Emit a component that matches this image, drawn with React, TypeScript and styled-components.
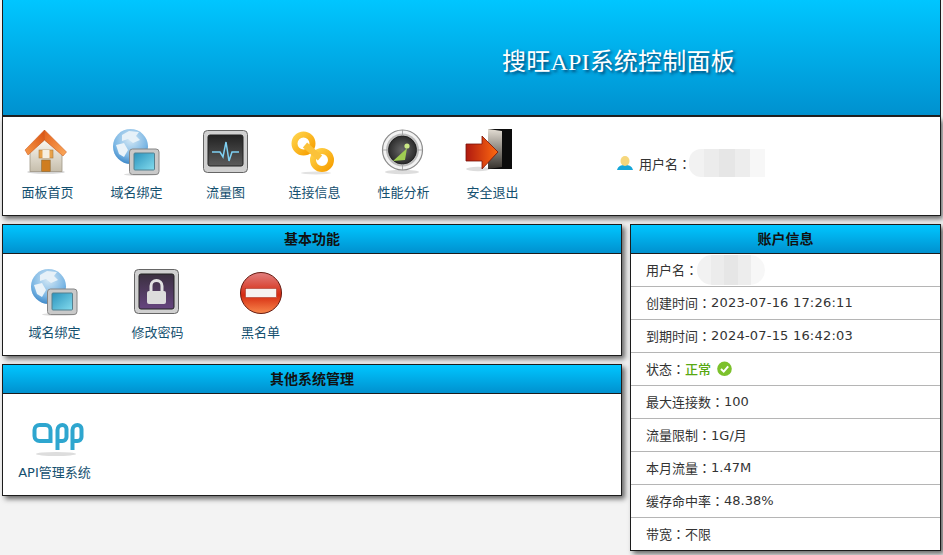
import React from "react";
import styled, {createGlobalStyle} from "styled-components";

const GlobalStyle = createGlobalStyle`
  html, body {
    margin: 0;
    padding: 0;
    background: #f3f3f3;
  }
  body {
    font-family: "DejaVu Sans", "Noto Sans CJK SC", sans-serif;
    font-size: 13px;
    color: #333;
  }
`

const blueBar = `linear-gradient(to bottom, #00c6ff, #0091cf)`

const Page = styled.div`
  width: 939px;
  height: 555px;
  padding: 0 2px;
  overflow: hidden;
`

const Header = styled.header`
  height: 117px;
  box-sizing: border-box;
  background: ${blueBar};
  border: 1px solid #1c1c1c;
  border-top: 0;
  border-bottom-width: 2px;
  padding: 47px 0 0 499px;
`

const Title = styled.h1`
  margin: 0;
  font-family: "Liberation Serif", "Noto Sans CJK SC", serif;
  font-size: 24px;
  line-height: 30px;
  font-weight: normal;
  letter-spacing: 0.2px;
  color: #fff;
  text-shadow: 2px 2px 3px rgba(0, 40, 80, 0.75);
`

const NavBar = styled.nav`
  height: 99px;
  box-sizing: border-box;
  background: #fff;
  border: 1px solid #1c1c1c;
  border-top: 0;
  box-shadow: 2px 3px 5px #666;
  display: flex;
  padding: 11px 0 0 0;
`

const IconItem = styled.a<{$width: number}>`
  width: ${p => p.$width}px;
  display: flex;
  flex-direction: column;
  align-items: center;
  color: #14506f;
  font-size: 13px;
  line-height: 16px;
  white-space: nowrap;
`

const IconBox = styled.div`
  width: 48px;
  height: 48px;
  margin-bottom: 9px;
`

const LogoBox = styled(IconBox)`
  width: 58px;
`

const UserInfo = styled.div`
  margin-left: 80px;
  height: 28px;
  margin-top: 21px;
  display: flex;
  align-items: center;
  color: #333;
`

const UserText = styled.span`
  margin-left: 6px;
`

// the colon sits in the middle of its em box in the reference, as the TC cut draws it
const Colon = styled.span`
  font-family: "Noto Sans CJK TC", sans-serif;
`

const Mosaic = styled.div<{$width: number; $height: number; $round: string; $pull: number}>`
  width: ${p => p.$width}px;
  height: ${p => p.$height}px;
  margin-left: -${p => p.$pull}px;
  border-radius: ${p => p.$round};
  background: linear-gradient(
    to right,
    #f2f2f2 0 20%,
    #ececec 20% 40%,
    #e6e6e6 40% 60%,
    #ededed 60% 80%,
    #f7f7f7 80% 100%
  );
`

const Columns = styled.div`
  display: grid;
  grid-template-columns: 620px 311px;
  gap: 8px;
  margin-top: 8px;
  align-items: start;
`

const LeftColumn = styled.div`
  display: flex;
  flex-direction: column;
  gap: 8px;
`

const Panel = styled.section`
  background: #fff;
  border: 1px solid #1c1c1c;
  box-shadow: 3px 3px 5px #666;
`

const PanelHead = styled.h2`
  margin: 0;
  height: 28px;
  box-sizing: content-box;
  background: ${blueBar};
  border-bottom: 1px solid #1c1c1c;
  text-align: center;
  font-size: 14px;
  font-weight: bold;
  line-height: 28px;
  color: #111;
`

const PanelBody = styled.div`
  display: flex;
  height: 101px;
  box-sizing: border-box;
  padding: 14px 0 0 0;
`

const InfoRow = styled.div`
  height: 33px;
  box-sizing: border-box;
  padding: 0 0 1px 15px;
  display: flex;
  align-items: center;
  border-bottom: 1px solid #b5b5b5;
  color: #333;
  white-space: pre;
  &:last-child {
    height: 32px;
    border-bottom: 0;
  }
`

const DateText = styled.span`
  letter-spacing: 0.2px;
`

const StatusOk = styled.span`
  color: #58a812;
  font-weight: 500;
  margin-right: 6px;
`

function HomeIcon() {
    return (
        <svg width="48" height="48" viewBox="0 0 48 48">
            <defs>
                <linearGradient id="roofLeft" x1="1" y1="0" x2="0" y2="1">
                    <stop offset="0" stopColor="#d9500f"/>
                    <stop offset="1" stopColor="#f79a4a"/>
                </linearGradient>
                <linearGradient id="roofRight" x1="0" y1="0" x2="1" y2="1">
                    <stop offset="0" stopColor="#e4601a"/>
                    <stop offset="1" stopColor="#fbab5c"/>
                </linearGradient>
                <linearGradient id="wall" x1="0" y1="0" x2="0" y2="1">
                    <stop offset="0" stopColor="#faf7f0"/>
                    <stop offset="1" stopColor="#c6beac"/>
                </linearGradient>
            </defs>
            <ellipse cx="22" cy="44" rx="19" ry="1.8" fill="#d4d4d4"/>
            <polygon points="6,24 20.5,12 38,26 38,43.5 6,43.5" fill="url(#wall)" stroke="#a09786" strokeWidth="0.8"/>
            <polygon points="20.5,2 1,22 4,27 20.5,12" fill="url(#roofLeft)" stroke="#c8500f" strokeWidth="0.5"/>
            <polygon points="20.5,2 42.5,24 39,28 20.5,12" fill="url(#roofRight)" stroke="#c8500f" strokeWidth="0.5"/>
            <rect x="15" y="22" width="14" height="8" fill="#e8a24a" stroke="#a87a3c" strokeWidth="0.6"/>
            <rect x="18.5" y="22" width="7" height="8" fill="#f6efe0"/>
            <rect x="17.7" y="32" width="8.5" height="11.5" fill="#cf7d1f" stroke="#8d6a34" strokeWidth="0.6"/>
        </svg>
    )
}

function GlobeIcon({prefix}: {prefix: string}) {
    return (
        <svg width="48" height="48" viewBox="0 0 48 48">
            <defs>
                <radialGradient id={`${prefix}sea`} cx="0.5" cy="0.3" r="0.8">
                    <stop offset="0" stopColor="#d4e8f5"/>
                    <stop offset="0.6" stopColor="#7ab6e4"/>
                    <stop offset="1" stopColor="#2474bc"/>
                </radialGradient>
                <linearGradient id={`${prefix}scr`} x1="0" y1="0" x2="1" y2="1">
                    <stop offset="0" stopColor="#2a92bc"/>
                    <stop offset="1" stopColor="#84dcee"/>
                </linearGradient>
            </defs>
            <circle cx="17.5" cy="18.5" r="17.5" fill={`url(#${prefix}sea)`}/>
            <path d="M9 7 L16 3 L26 4 L23 8 L27 12 L20 15 L15 11 L9 13 Z" fill="#e6f1f8"/>
            <path d="M3 17 L11 15 L15 22 L11 29 L6 26 Z" fill="#eaf3f9"/>
            <ellipse cx="28" cy="46.5" rx="17" ry="1.3" fill="#ddd"/>
            <rect x="16.5" y="21" width="29.5" height="25.5" rx="3" fill="#c9c9c9" stroke="#868686"/>
            <rect x="21" y="25" width="20.5" height="17" rx="1" fill={`url(#${prefix}scr)`} stroke="#55808f"/>
        </svg>
    )
}

function TrafficIcon() {
    return (
        <svg width="48" height="48" viewBox="0 0 48 48">
            <defs>
                <linearGradient id="mon" x1="0" y1="0" x2="0" y2="1">
                    <stop offset="0" stopColor="#222"/>
                    <stop offset="1" stopColor="#5c5c5c"/>
                </linearGradient>
            </defs>
            <rect x="1.5" y="2.5" width="44" height="42" rx="4" fill="#d0d0d0" stroke="#666"/>
            <rect x="6" y="7" width="35" height="31" rx="2" fill="url(#mon)" stroke="#222"/>
            <polyline points="10,24 18,24 21,29 24,14 27,33 30,24 37,24" fill="none" stroke="#7fd0f2" strokeWidth="1.5"/>
        </svg>
    )
}

function ChainIcon() {
    return (
        <svg width="48" height="48" viewBox="0 0 48 48">
            <defs>
                <linearGradient id="gold" x1="0" y1="0" x2="1" y2="1">
                    <stop offset="0" stopColor="#ffd24a"/>
                    <stop offset="1" stopColor="#f79f00"/>
                </linearGradient>
            </defs>
            <ellipse cx="25" cy="45" rx="15" ry="1.5" fill="#e2e2e2"/>
            <circle cx="12.5" cy="15.5" r="9" fill="none" stroke="url(#gold)" strokeWidth="6"/>
            <circle cx="31" cy="32" r="9" fill="none" stroke="url(#gold)" strokeWidth="6"/>
            <path d="M14 17 L29 30" stroke="#fbc23a" strokeWidth="6.5"/>
        </svg>
    )
}

function RadarIcon() {
    return (
        <svg width="48" height="48" viewBox="0 0 48 48">
            <defs>
                <radialGradient id="scope" cx="0.5" cy="0.5" r="0.5">
                    <stop offset="0" stopColor="#6a6a6a"/>
                    <stop offset="1" stopColor="#2c2c2c"/>
                </radialGradient>
            </defs>
            <ellipse cx="22" cy="44" rx="17" ry="2.2" fill="#ddd"/>
            <circle cx="22.5" cy="22" r="20" fill="#f2f2f2" stroke="#8a8a8a" strokeWidth="1.2"/>
            <circle cx="22.5" cy="22" r="16.5" fill="#bcbcbc"/>
            <circle cx="22.5" cy="22" r="14" fill="url(#scope)" stroke="#222"/>
            <polygon points="13,33 24,23 27,20 25,32" fill="#9fce52"/>
            <circle cx="27" cy="18" r="2.6" fill="#cbe886"/>
            <path d="M22.5 2 V8 M22.5 36 V42 M2.5 22 H8.5 M36.5 22 H42.5" stroke="#999" strokeWidth="0.8"/>
        </svg>
    )
}

function ExitIcon() {
    return (
        <svg width="48" height="48" viewBox="4 0 48 48" overflow="visible">
            <defs>
                <linearGradient id="door" x1="0" y1="0" x2="0" y2="1">
                    <stop offset="0" stopColor="#e4ded4"/>
                    <stop offset="1" stopColor="#35312c"/>
                </linearGradient>
                <linearGradient id="arrow" x1="0" y1="0" x2="1" y2="0">
                    <stop offset="0" stopColor="#b01a10"/>
                    <stop offset="1" stopColor="#ff6a10"/>
                </linearGradient>
            </defs>
            <ellipse cx="13" cy="41" rx="12" ry="2.2" fill="#ddd"/>
            <rect x="23" y="1" width="24" height="40" fill="#0c0c0c"/>
            <polygon points="23,1 37,3 37,39 23,41" fill="url(#door)"/>
            <polygon points="1,16 17,16 17,8 33,24 17,41 17,33 1,33" fill="url(#arrow)" stroke="#7a1208" strokeWidth="0.8"/>
        </svg>
    )
}

function LockIcon() {
    return (
        <svg width="48" height="48" viewBox="0 0 48 48">
            <defs>
                <linearGradient id="plum" x1="0" y1="0" x2="0" y2="1">
                    <stop offset="0" stopColor="#3b3040"/>
                    <stop offset="1" stopColor="#66457f"/>
                </linearGradient>
            </defs>
            <rect x="0.5" y="1.5" width="44" height="44" rx="4" fill="#d0d0d0" stroke="#666"/>
            <rect x="5" y="6" width="35" height="35" rx="2" fill="url(#plum)" stroke="#222"/>
            <path d="M17 24 V18 a5.5 5.5 0 0 1 11 0 V24" fill="none" stroke="#e2e2e2" strokeWidth="3"/>
            <rect x="13" y="23" width="19" height="13" rx="2" fill="#dcdcdc"/>
        </svg>
    )
}

function BlockIcon() {
    return (
        <svg width="48" height="48" viewBox="0 0 48 48">
            <defs>
                <linearGradient id="stop" x1="0" y1="0" x2="0" y2="1">
                    <stop offset="0" stopColor="#e28080"/>
                    <stop offset="0.55" stopColor="#d52a10"/>
                    <stop offset="1" stopColor="#f9884c"/>
                </linearGradient>
            </defs>
            <circle cx="24" cy="25" r="20.5" fill="url(#stop)" stroke="#661a10"/>
            <rect x="8.5" y="20.5" width="31" height="9" fill="#f6f2f0" stroke="#a02818" strokeWidth="0.5"/>
        </svg>
    )
}

function AppLogo() {
    return (
        <svg width="58" height="48" viewBox="0 0 58 48">
            <ellipse cx="30" cy="46" rx="20" ry="2" fill="#ddd"/>
            <g fill="none" stroke="#2ea6cf" strokeWidth="4">
                <path d="M24.5 33 H13.5 a5 5 0 0 1 -5 -5 V22 a5 5 0 0 1 5 -5 H19.5 a5 5 0 0 1 5 5 Z"/>
                <path d="M31.5 42 V22 a5 5 0 0 1 5 -5 a4 4 0 0 1 4 4 V29 a4 4 0 0 1 -4 4 H31.5"/>
                <path d="M46.5 42 V22 a5 5 0 0 1 5 -5 a4 4 0 0 1 4 4 V29 a4 4 0 0 1 -4 4 H46.5"/>
            </g>
        </svg>
    )
}

function UserIcon() {
    return (
        <svg width="16" height="16" viewBox="0 0 16 16">
            <path d="M0 15 C1 11 4 10 8 10 C12 10 15 11 16 15 Z" fill="#16a6d8"/>
            <ellipse cx="8" cy="6" rx="4.5" ry="5" fill="#f6d77c"/>
        </svg>
    )
}

function CheckIcon() {
    return (
        <svg width="15" height="16" viewBox="0 0 15 16">
            <circle cx="7.5" cy="7.8" r="7.3" fill="#7cc12c"/>
            <polyline points="4,8 6.7,10.6 11.2,5.4" fill="none" stroke="#fff" strokeWidth="2"/>
        </svg>
    )
}

export default function App() {
    return (
        <Page>
            <GlobalStyle/>
            <Header>
                <Title>搜旺API系统控制面板</Title>
            </Header>

            <NavBar>
                <IconItem $width={89}><IconBox><HomeIcon/></IconBox>面板首页</IconItem>
                <IconItem $width={89}><IconBox><GlobeIcon prefix="nav"/></IconBox>域名绑定</IconItem>
                <IconItem $width={89}><IconBox><TrafficIcon/></IconBox>流量图</IconItem>
                <IconItem $width={89}><IconBox><ChainIcon/></IconBox>连接信息</IconItem>
                <IconItem $width={89}><IconBox><RadarIcon/></IconBox>性能分析</IconItem>
                <IconItem $width={89}><IconBox><ExitIcon/></IconBox>安全退出</IconItem>
                <UserInfo>
                    <UserIcon/>
                    <UserText>用户名<Colon>：</Colon></UserText>
                    <Mosaic $width={76} $height={28} $round="12px 0 0 12px" $pull={2}/>
                </UserInfo>
            </NavBar>

            <Columns>
                <LeftColumn>
                    <Panel>
                        <PanelHead>基本功能</PanelHead>
                        <PanelBody>
                            <IconItem $width={103}><IconBox><GlobeIcon prefix="basic"/></IconBox>域名绑定</IconItem>
                            <IconItem $width={103}><IconBox><LockIcon/></IconBox>修改密码</IconItem>
                            <IconItem $width={103}><IconBox><BlockIcon/></IconBox>黑名单</IconItem>
                        </PanelBody>
                    </Panel>
                    <Panel>
                        <PanelHead>其他系统管理</PanelHead>
                        <PanelBody>
                            <IconItem $width={103}><LogoBox><AppLogo/></LogoBox>API管理系统</IconItem>
                        </PanelBody>
                    </Panel>
                </LeftColumn>

                <Panel>
                    <PanelHead>账户信息</PanelHead>
                    <InfoRow>用户名<Colon>：</Colon><Mosaic $width={68} $height={30} $round="15px" $pull={1}/></InfoRow>
                    <InfoRow>创建时间<Colon>：</Colon><DateText>2023-07-16 17:26:11</DateText></InfoRow>
                    <InfoRow>到期时间<Colon>：</Colon><DateText>2024-07-15 16:42:03</DateText></InfoRow>
                    <InfoRow>状态<Colon>：</Colon><StatusOk>正常</StatusOk><CheckIcon/></InfoRow>
                    <InfoRow>最大连接数<Colon>：</Colon>100</InfoRow>
                    <InfoRow>流量限制<Colon>：</Colon>1G/月</InfoRow>
                    <InfoRow>本月流量<Colon>：</Colon>1.47M</InfoRow>
                    <InfoRow>缓存命中率<Colon>：</Colon>48.38%</InfoRow>
                    <InfoRow>带宽<Colon>：</Colon>不限</InfoRow>
                </Panel>
            </Columns>
        </Page>
    )
}
